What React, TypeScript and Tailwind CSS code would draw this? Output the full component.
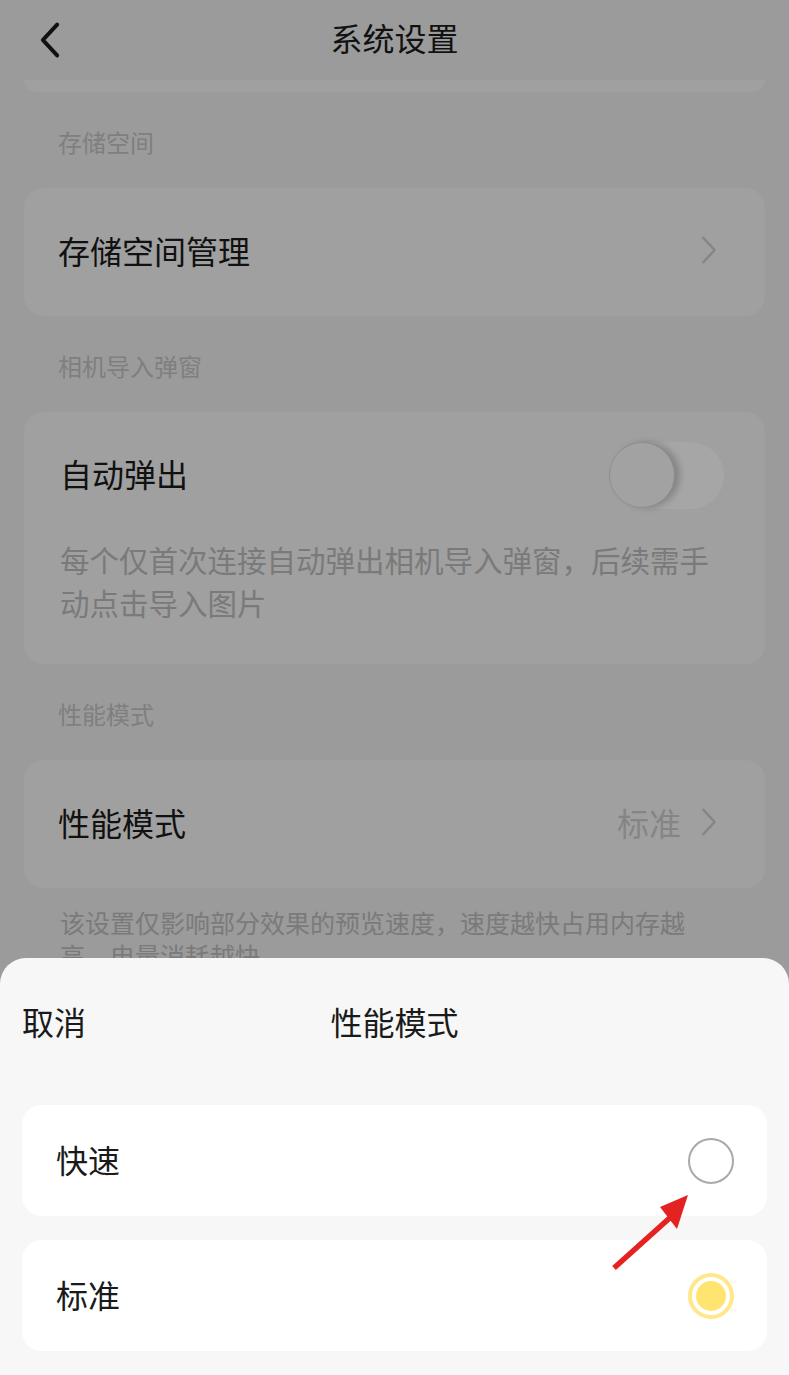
import React from 'react';

function Chevron({ className, width = 2.6 }: { className?: string; width?: number }) {
  return (
    <svg viewBox="0 0 20 32" className={className} fill="none" stroke="currentColor" strokeWidth={width} strokeLinecap="round" strokeLinejoin="round">
      <path d="M4 3l12 13L4 29" />
    </svg>
  );
}

function SectionLabel({ text }: { text: string }) {
  return <div className="px-[58px] pt-[34px] pb-[30px] text-[24px] leading-[32px] text-[#7f7f7f]">{text}</div>;
}

function Option({ label, selected }: { label: string; selected?: boolean }) {
  return (
    <div className="flex h-[111px] items-center justify-between rounded-[20px] bg-white pb-[3px] pl-[34px] pr-[33px]">
      <span className="text-[32px] text-[#1a1a1a]">{label}</span>
      {selected ? (
        <div className="mt-[3px] flex h-[46px] w-[46px] items-center justify-center rounded-full border-[4px] border-[#ffe88a]">
          <div className="h-[30px] w-[30px] rounded-full bg-[#ffe470]" />
        </div>
      ) : (
        <div className="mt-[3px] h-[46px] w-[46px] rounded-full border-[2px] border-[#a9a9a9]" />
      )}
    </div>
  );
}

export default function App() {
  return (
    <div className="relative h-[1375px] w-[789px] overflow-hidden bg-[#9b9b9b] font-['Noto_Sans_CJK_SC',sans-serif]">
      {/* dimmed settings page */}
      <div className="relative flex h-[80px] items-center justify-center pb-[6px]">
        <Chevron width={3.4} className="absolute left-[37px] top-[21px] h-[38px] w-[26px] rotate-180 text-[#111]" />
        <span className="text-[32px] text-[#111]">系统设置</span>
      </div>
      <div className="mx-[24px] h-[12px] rounded-b-[20px] bg-[#a0a0a0]" />

      <SectionLabel text="存储空间" />
      <div className="mx-[24px] flex h-[128px] items-center justify-between rounded-[20px] bg-[#a0a0a0] pb-[4px] pl-[34px] pr-[46px]">
        <span className="text-[32px] text-[#111]">存储空间管理</span>
        <Chevron className="h-[30px] w-[20px] text-[#858585]" />
      </div>

      <SectionLabel text="相机导入弹窗" />
      <div className="mx-[24px] rounded-[20px] bg-[#a0a0a0] pb-[40px]">
        <div className="flex h-[126px] items-center justify-between pl-[36px] pr-[41px]">
          <span className="pb-[4px] text-[32px] text-[#111]">自动弹出</span>
          <div className="flex h-[67px] w-[115px] items-center rounded-full bg-[#a6a6a6]">
            <div className="h-[66px] w-[66px] rounded-full border border-[#8e8e8e] bg-[#a2a2a2] shadow-[5px_0_6px_rgba(0,0,0,0.2)]" />
          </div>
        </div>
        <div className="pl-[36px] pr-[50px] text-[29.5px] leading-[43px] text-[#7a7a7a]">
          每个仅首次连接自动弹出相机导入弹窗，后续需手动点击导入图片
        </div>
      </div>

      <SectionLabel text="性能模式" />
      <div className="mx-[24px] flex h-[128px] items-center justify-between rounded-[20px] bg-[#a0a0a0] pb-[4px] pl-[34px] pr-[46px]">
        <span className="text-[32px] text-[#111]">性能模式</span>
        <div className="flex items-center gap-[18px]">
          <span className="text-[32px] text-[#858585]">标准</span>
          <Chevron className="h-[30px] w-[20px] text-[#858585]" />
        </div>
      </div>
      <div className="w-[760px] px-[60px] pt-[18px] text-[25px] leading-[33px] text-[#7a7a7a]">
        该设置仅影响部分效果的预览速度，速度越快占用内存越高，电量消耗越快
      </div>

      {/* bottom sheet */}
      <div className="absolute bottom-0 left-0 right-0 h-[417px] rounded-t-[26px] bg-[#f7f7f7] px-[22px]">
        <div className="relative flex h-[130px] items-center justify-center pb-[4px]">
          <span className="absolute left-0 text-[32px] text-[#1a1a1a]">取消</span>
          <span className="text-[32px] text-[#1a1a1a]">性能模式</span>
        </div>
        <div className="mt-[17px] flex flex-col gap-[24px]">
          <Option label="快速" />
          <Option label="标准" selected />
        </div>
      </div>

      {/* annotation arrow */}
      <svg className="absolute left-[605px] top-[1185px] h-[92px] w-[92px]" viewBox="0 0 92 92">
        <line x1="9" y1="83" x2="68" y2="30" stroke="#e52222" strokeWidth="5.5" strokeLinecap="butt" />
        <polygon points="83,10 55,22 72,44" fill="#e52222" />
      </svg>
    </div>
  );
}
